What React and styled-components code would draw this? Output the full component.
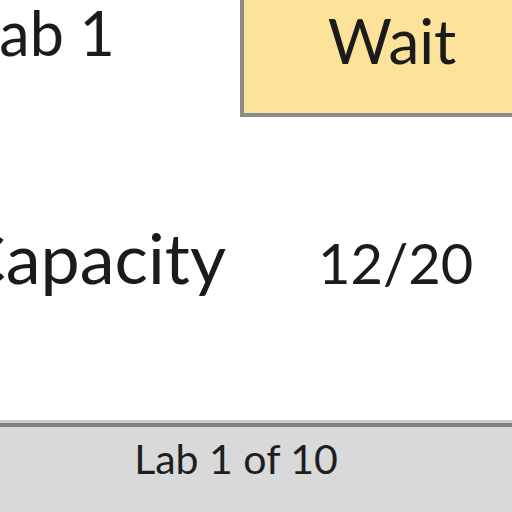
import React from 'react'
import styled, { createGlobalStyle } from 'styled-components'

const GlobalStyle = createGlobalStyle`
  html, body {
    margin: 0;
    padding: 0;
    background: #ffffff;
    overflow: hidden;
  }
  body {
    font-family: Lato, "Open Sans", sans-serif;
    color: #1b1b1b;
  }
`

const Screen = styled.div`
  width: 512px;
  height: 512px;
  overflow: hidden;
`

const Frame = styled.div`
  width: 544px;
  height: 512px;
  margin-left: -32px;
  display: flex;
  flex-direction: column;
`

const Header = styled.div`
  display: flex;
  align-items: flex-start;
  height: 117px;
`

const Title = styled.h1`
  flex: none;
  margin: 0;
  padding-top: 2px;
  width: 272px;
  font-size: 61px;
  font-weight: 400;
  line-height: 1;
`

const StatusBadge = styled.div`
  flex: none;
  width: 296px;
  height: 113px;
  box-sizing: content-box;
  background: ${props => props.color};
  border-left: 4px solid #8c8c8c;
  border-bottom: 4px solid #8c8c8c;
  font-size: 62px;
  line-height: 1;
  text-align: center;
  & > span {
    display: block;
    padding-top: 9px;
  }
`

const InfoRow = styled.div`
  display: grid;
  grid-template-columns: 350px auto;
  align-items: baseline;
  margin-top: 105px;
  line-height: 1;
`

const Label = styled.span`
  margin-left: -9px;
  font-size: 70px;
`

const Value = styled.span`
  font-size: 56px;
`

const Footer = styled.div`
  margin-top: auto;
  height: 85px;
  background: #d9d9d9;
  border-top: 4px solid #808080;
  box-shadow: 0 -3px 0 #cdcdcd;
  padding-right: 8px;
  text-align: center;
  font-size: 41px;
  line-height: 1;
  color: #1e1e1e;
  & > span {
    display: block;
    padding-top: 11px;
  }
`

const App = () => {
  const lab = { name: 'Lab 1', status: 'Wait', used: 12, capacity: 20, index: 1, total: 10 }

  return (
    <Screen>
      <GlobalStyle />
      <Frame>
        <Header>
          <Title>{lab.name}</Title>
          <StatusBadge color="#fde29a"><span>{lab.status}</span></StatusBadge>
        </Header>
        <InfoRow>
          <Label>Capacity</Label>
          <Value>{lab.used}/{lab.capacity}</Value>
        </InfoRow>
        <Footer><span>Lab {lab.index} of {lab.total}</span></Footer>
      </Frame>
    </Screen>
  )
}

export default App
